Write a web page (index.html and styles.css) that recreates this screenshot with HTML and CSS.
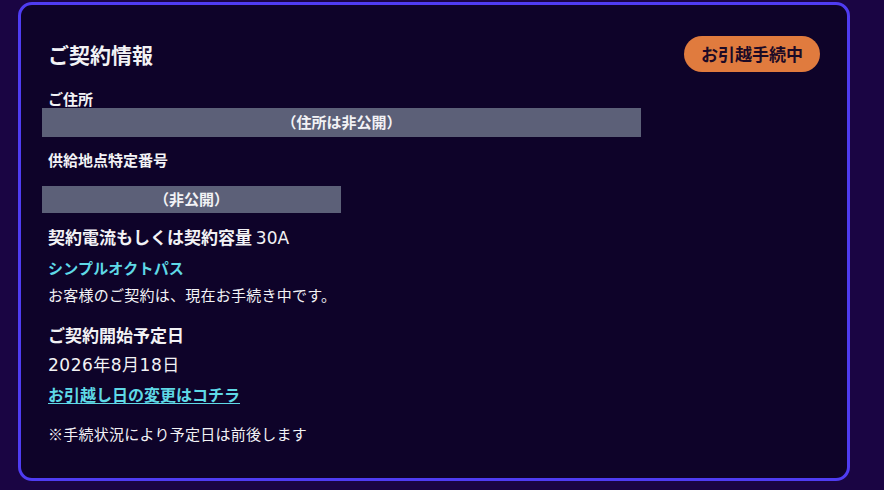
FILE: index.html
```html
<!DOCTYPE html>
<html lang="ja">
<head>
<meta charset="utf-8">
<link rel="stylesheet" href="styles.css">
</head>
<body>
<section class="card">
  <div class="card-head">
    <h2 class="title">ご契約情報</h2>
    <span class="badge">お引越手続中</span>
  </div>
  <div class="label label-addr">ご住所</div>
  <div class="mask mask-wide">（住所は非公開）</div>
  <div class="label label-spot">供給地点特定番号</div>
  <div class="mask mask-narrow">（非公開）</div>
  <div class="big bold cap">契約電流もしくは契約容量 <span class="latin">30A</span></div>
  <div class="plan">シンプルオクトパス</div>
  <div class="note">お客様のご契約は、現在お手続き中です。</div>
  <div class="big bold start">ご契約開始予定日</div>
  <div class="big date latin">2026年8月18日</div>
  <a class="link" href="#">お引越し日の変更はコチラ</a>
  <div class="note foot">※手続状況により予定日は前後します</div>
</section>
</body>
</html>
```
FILE: styles.css
```css
html, body {
  margin: 0;
  padding: 0;
}
body {
  background: #1a0543;
  font-family: "Noto Sans CJK JP", "Noto Sans", sans-serif;
  color: #f2f2f5;
  width: 884px;
  height: 490px;
  overflow: hidden;
}
.card {
  box-sizing: border-box;
  margin: 2px 0 0 18px;
  width: 832px;
  height: 479px;
  border: 3px solid #4f3cf2;
  border-radius: 14px;
  background: #0e0329;
  padding: 31px 27px 0 27px;
  display: flex;
  flex-direction: column;
  align-items: flex-start;
}
.card-head {
  align-self: stretch;
  display: flex;
  justify-content: space-between;
  align-items: center;
  height: 36px;
}
.title {
  margin: 0;
  font-size: 21px;
  font-weight: 700;
  line-height: 36px;
}
.badge {
  box-sizing: border-box;
  width: 136px;
  height: 36px;
  border-radius: 18px;
  background: #e07b3e;
  color: #1c0a26;
  font-size: 17px;
  font-weight: 700;
  line-height: 36px;
  text-align: center;
}
.label {
  font-size: 15px;
  font-weight: 700;
  line-height: 18px;
}
.label-addr { margin-top: 18px; }
.label-spot { margin-top: 14px; }
.mask {
  margin-left: -6px;
  background: #5c6078;
  color: #f2f2f5;
  font-size: 15px;
  font-weight: 700;
  text-align: center;
}
.mask-wide {
  width: 599px;
  height: 29px;
  line-height: 27px;
}
.mask-narrow {
  margin-top: 17px;
  width: 299px;
  height: 27px;
  line-height: 26px;
}
.big {
  font-size: 17px;
  line-height: 24px;
}
.bold { font-weight: 700; }
.latin {
  font-family: "DejaVu Sans", "Noto Sans CJK JP", sans-serif;
}
.cap { margin-top: 12px; }
.cap .latin { font-weight: 400; }
.plan {
  margin-top: 7px;
  color: #5fd9e6;
  font-size: 15px;
  font-weight: 700;
  line-height: 22px;
  letter-spacing: 0.2px;
}
.note {
  margin-top: 5px;
  font-size: 15px;
  line-height: 22px;
  letter-spacing: 0.25px;
}
.start { margin-top: 17px; }
.date {
  margin-top: 6px;
  letter-spacing: 0.5px;
}
.link {
  margin-top: 6px;
  color: #5fd9e6;
  font-size: 16px;
  font-weight: 700;
  line-height: 22px;
  text-decoration: underline;
  text-underline-offset: 2px;
}
.foot { margin-top: 18px; }
```
